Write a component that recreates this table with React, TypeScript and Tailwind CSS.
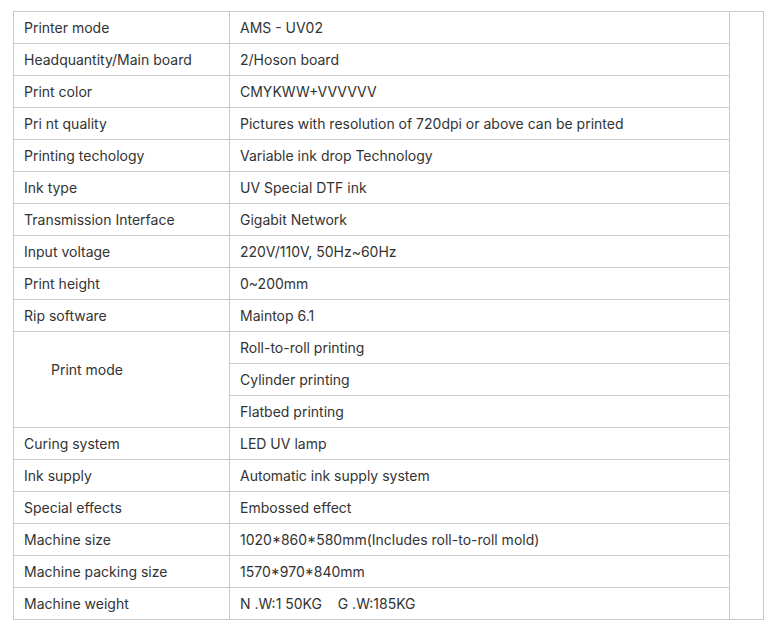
const rows: [string, string][] = [
  ["Printer mode", "AMS - UV02"],
  ["Headquantity/Main board", "2/Hoson board"],
  ["Print color", "CMYKWW+VVVVVV"],
  ["Pri nt quality", "Pictures with resolution of 720dpi or above can be printed"],
  ["Printing techology", "Variable ink drop Technology"],
  ["Ink type", "UV Special DTF ink"],
  ["Transmission Interface", "Gigabit Network"],
  ["Input voltage", "220V/110V, 50Hz~60Hz"],
  ["Print height", "0~200mm"],
  ["Rip software", "Maintop 6.1"],
];

const rowsAfter: [string, string][] = [
  ["Curing system", "LED UV lamp"],
  ["Ink supply", "Automatic ink supply system"],
  ["Special effects", "Embossed effect"],
  ["Machine size", "1020*860*580mm(Includes roll-to-roll mold)"],
  ["Machine packing size", "1570*970*840mm"],
  ["Machine weight", "N .W:1 50KG\u00a0\u00a0\u00a0\u00a0G .W:185KG"],
];

const cell = "border border-[#c9c9c9] h-[32px] px-[10px] py-0 align-middle";

export default function App() {
  return (
    <div className="bg-white min-h-[627px] pt-[11px] pl-[13px] font-['Inter',sans-serif] text-[14px] text-[#333]">
      <table className="table-fixed border-collapse w-[750px]">
        <colgroup>
          <col className="w-[216px]" />
          <col className="w-[500px]" />
          <col className="w-[34px]" />
        </colgroup>
        <tbody>
          {rows.map(([k, v], i) => (
            <tr key={k}>
              <td className={cell}>{k}</td>
              <td className={cell}>{v}</td>
              {i === 0 && <td className={cell} rowSpan={19}></td>}
            </tr>
          ))}
          <tr>
            <td className={`${cell} pl-[37px] pb-[21px]`} rowSpan={3}>
              Print mode
            </td>
            <td className={cell}>Roll-to-roll printing</td>
          </tr>
          <tr>
            <td className={cell}>Cylinder printing</td>
          </tr>
          <tr>
            <td className={cell}>Flatbed printing</td>
          </tr>
          {rowsAfter.map(([k, v]) => (
            <tr key={k}>
              <td className={cell}>{k}</td>
              <td className={cell}>{v}</td>
            </tr>
          ))}
        </tbody>
      </table>
    </div>
  );
}
